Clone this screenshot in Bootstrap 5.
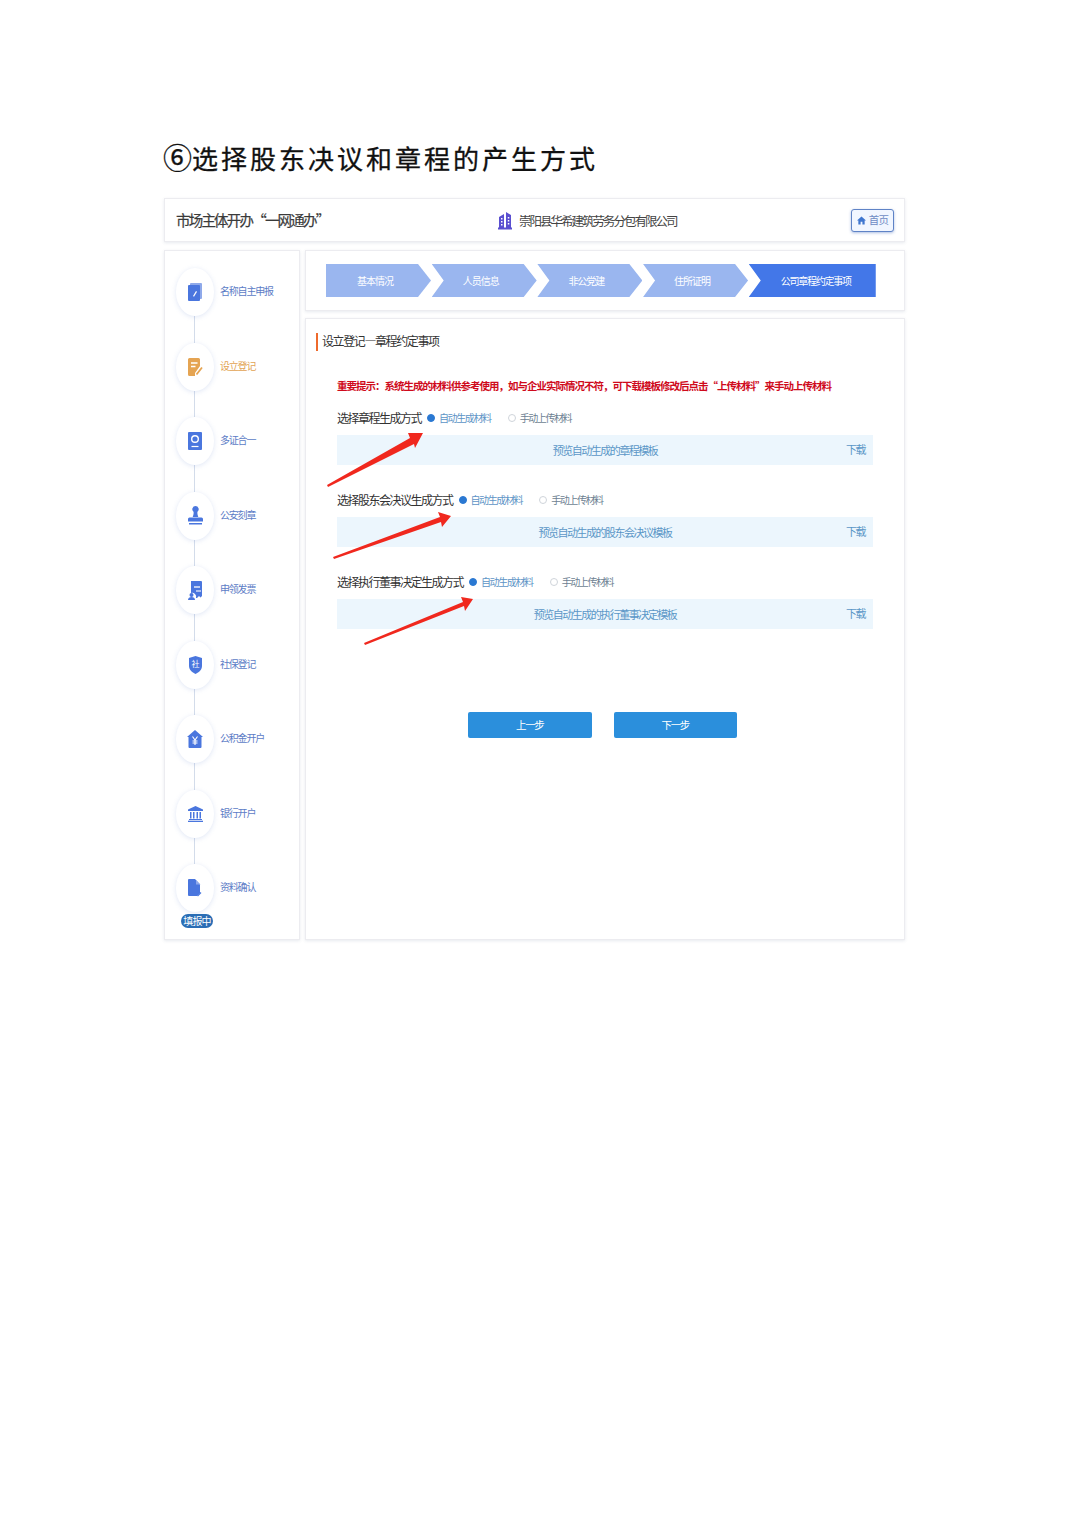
<!DOCTYPE html>
<html lang="zh-CN">
<head>
  <meta charset="UTF-8" />
  <meta name="viewport" content="width=device-width, initial-scale=1">
  <title>选择股东决议和章程的产生方式</title>
  <link href="https://cdn.jsdelivr.net/npm/bootstrap@5.3.0/dist/css/bootstrap.min.css" rel="stylesheet">
  <style>
    body {
      font-family: "Noto Sans CJK SC", "Liberation Sans", sans-serif;
      background: #fff;
      color: #333;
    }
    .pageWrap {
      position: relative;
      width: 1074px;
      height: 1520px;
      padding: 142px 0 0 164px;
    }
    .docTitle {
      height: 30px;
      font-size: 26px;
      line-height: 30px;
      letter-spacing: 3px;
      color: #111;
      margin: 0 0 26px -1px;
      font-weight: 400;
      -webkit-text-stroke: .3px #111;
      white-space: nowrap;
    }
    .circleNum { font-size: 29px; letter-spacing: 0; line-height: 1; }
    .appFrame { width: 741px; }
    .panelBox {
      background: #fff;
      border: 1px solid #ececf0;
      box-shadow: 0 1px 3px rgba(60, 80, 120, .12);
    }
    .topBar {
      height: 44px;
      margin-bottom: 8px;
      padding: 0 10px 0 11px;
      position: relative;
    }
    .brandText {
      font-size: 14.5px;
      letter-spacing: -1.8px;
      color: #3a3a3a;
      -webkit-text-stroke: .2px #3a3a3a;
    }
    .companyText {
      font-size: 12.5px;
      letter-spacing: -2px;
      color: #444;
    }
    .companyBox { position: absolute; left: 333px; top: 13px; gap: 7px; }
    .homeBtn {
      width: 43px;
      height: 23px;
      padding: 0;
      font-size: 10.5px;
      letter-spacing: -.8px;
      color: #6f8cc4;
      background: #f1f6ff;
      border: 1px solid #5f83c6;
      border-radius: 3px;
      box-shadow: 0 1px 3px rgba(70, 110, 190, .45);
      gap: 3px;
    }
    .bodyRow { gap: 5px; }
    .sideNav {
      width: 136px;
      height: 690px;
      padding: 17px 0 0 11px;
      position: relative;
    }
    .navNode { height: 48px; gap: 6px; position: relative; }
    .navOval {
      width: 38px;
      height: 48px;
      border-radius: 50%;
      background: #fff;
      box-shadow: 0 1px 5px rgba(110, 140, 210, .22);
      flex: none;
    }
    .navText {
      font-size: 10px;
      letter-spacing: -1.2px;
      color: #5c7cc6;
      margin-top: -3px;
    }
    .navText.isActive { color: #e2a352; }
    .navLine {
      width: 1px;
      height: 26.5px;
      margin-left: 18px;
      background: #d3dcea;
    }
    .statusPill {
      position: absolute;
      left: 5px;
      top: 50px;
      width: 32px;
      height: 14px;
      line-height: 14px;
      text-align: center;
      border-radius: 7px;
      background: #2a6db5;
      color: #fff;
      font-size: 10px;
      letter-spacing: -.9px;
    }
    .mainCol { width: 600px; }
    .stepBar {
      height: 61px;
      margin-bottom: 7px;
      padding-left: 20px;
    }
    .stepItem {
      width: 105px;
      height: 33px;
      margin-right: .7px;
      padding-right: 7px;
      background: #9ab6ef;
      color: #fff;
      font-size: 10px;
      letter-spacing: -1px;
      clip-path: polygon(0 0, 92px 0, 100% 50%, 92px 100%, 0 100%, 12px 50%);
    }
    .stepItem:first-child { clip-path: polygon(0 0, 92px 0, 100% 50%, 92px 100%, 0 100%); }
    .stepItem.isCurrent {
      width: 127px;
      padding: 0 0 0 7px;
      background: #4377e8;
      letter-spacing: -1.25px;
      clip-path: polygon(0 0, 100% 0, 100% 100%, 0 100%, 12px 50%);
    }
    .formBox {
      height: 622px;
      padding: 14px 31px 0 31px;
      position: relative;
    }
    .formHead {
      height: 18px;
      line-height: 16px;
      font-size: 12px;
      letter-spacing: -1.4px;
      color: #333;
      margin-left: -21px;
      padding-left: 4px;
      border-left: 2px solid #ee6a2c;
      margin-bottom: 27px;
    }
    .noticeText {
      font-size: 10.5px;
      line-height: 16px;
      letter-spacing: -1px;
      font-weight: 700;
      color: #cf0a1c;
      margin-bottom: 15px;
      white-space: nowrap;
    }
    .optRow { height: 18px; margin-bottom: 8px; }
    .optLabel {
      font-size: 12px;
      letter-spacing: -1.5px;
      color: #333;
      margin-right: 6px;
    }
    .optRow .form-check-input {
      width: 8px;
      height: 8px;
      margin: 0 4px 0 0;
      flex: none;
      border: 1px solid #cfd4da;
    }
    .optRow .form-check-input:checked {
      background: #2a78d2;
      border-color: #2a78d2;
    }
    .optText {
      font-size: 10px;
      letter-spacing: -1.4px;
      color: #6d7f92;
      margin: -1px 17px 0 0;
    }
    .optText.isOn { color: #5d94c6; }
    .tplBar {
      height: 30px;
      background: #ecf6fd;
      color: #5b97c7;
      font-size: 11px;
      letter-spacing: -1.5px;
      position: relative;
      margin-bottom: 26px;
    }
    .tplDown { position: absolute; right: 8px; top: 6px; line-height: 16px; }
    .btnGroupRow { gap: 22px; margin: 83px 0 0 131px; }
    .stepBtn {
      width: 123.5px;
      height: 26px;
      padding: 0;
      border: 0;
      border-radius: 2px;
      background: #2b8fdc;
      color: #fff;
      font-size: 10.5px;
      letter-spacing: -1.3px;
    }
    .arrowLayer {
      position: absolute;
      left: 0;
      top: 0;
      pointer-events: none;
    }
  </style>
</head>
<body>
  <div class="pageWrap">
    <h1 class="docTitle"><span class="circleNum">⑥</span>选择股东决议和章程的产生方式</h1>

    <div class="appFrame">
      <div class="panelBox topBar d-flex align-items-center justify-content-between">
        <span class="brandText">市场主体开办“一网通办”</span>
        <div class="companyBox d-flex align-items-center">
          <svg width="14" height="18" viewBox="0 0 14 18" fill="#5a4fd0"><path d="M1 5l5-3v14H1zM8 0l5 3v13H8z"/><rect y="15.500" width="14" height="2"/><path fill="#fff" d="M3 6h1.500v1.500H3zM3 9h1.500v1.500H3zM3 12h1.500v1.500H3zM9.800 5h1.500v1.500H9.800zM9.800 8h1.500v1.500H9.800zM9.800 11h1.500v1.500H9.800z"/></svg>
          <span class="companyText">崇阳县华希建筑劳务分包有限公司</span>
        </div>
        <button type="button" class="btn homeBtn d-flex align-items-center justify-content-center">
          <svg width="9" height="9" viewBox="0 0 10 10" fill="#3f76cf"><path d="M5 .5L10 5H8.500v4.500H6V6.500H4v3H1.500V5H0z"/></svg>首页
        </button>
      </div>

      <div class="bodyRow d-flex">
        <div class="panelBox sideNav">
          <div class="navNode d-flex align-items-center">
            <div class="navOval d-flex align-items-center justify-content-center">
              <svg width="14" height="18" viewBox="0 0 14 18"><rect x="2" width="12" height="16" rx="1" fill="#8fa9ea"/><rect y="2" width="12" height="16" rx="1" fill="#4a76de"/><path d="M5 13l3-5 1 .8-3 5z" fill="#fff"/></svg>
            </div>
            <span class="navText">名称自主申报</span>
          </div>
          <div class="navLine"></div>
          <div class="navNode d-flex align-items-center">
            <div class="navOval d-flex align-items-center justify-content-center">
              <svg width="15" height="18" viewBox="0 0 15 18"><path d="M1.500 0h9A1.500 1.500 0 0 1 12 1.500V8l-5 7v3H1.500A1.500 1.500 0 0 1 0 16.500v-15A1.500 1.500 0 0 1 1.500 0z" fill="#e5a452"/><path d="M3 5h6.500M3 8.500h4.500" stroke="#fff" stroke-width="1.300"/><path d="M8.500 16.500l5.500-7" stroke="#e5a452" stroke-width="1.800"/></svg>
            </div>
            <span class="navText isActive">设立登记</span>
          </div>
          <div class="navLine"></div>
          <div class="navNode d-flex align-items-center">
            <div class="navOval d-flex align-items-center justify-content-center">
              <svg width="14" height="18" viewBox="0 0 14 18"><rect width="14" height="18" rx="1" fill="#4a76de"/><circle cx="7" cy="7" r="3.300" fill="none" stroke="#fff" stroke-width="1.400"/><path d="M3.500 14.500h7" stroke="#fff" stroke-width="1.200"/></svg>
            </div>
            <span class="navText">多证合一</span>
          </div>
          <div class="navLine"></div>
          <div class="navNode d-flex align-items-center">
            <div class="navOval d-flex align-items-center justify-content-center">
              <svg width="15" height="19" viewBox="0 0 15 19" fill="#4a76de"><path d="M7.500 0a3.200 3.200 0 0 1 2 5.700c-.4 1.800 0 3.300.8 5.300H4.700c.8-2 1.200-3.500.8-5.300a3.200 3.200 0 0 1 2-5.700z"/><path d="M1.500 11.500h12a1.500 1.500 0 0 1 1.500 1.500v2.500H0V13a1.500 1.500 0 0 1 1.500-1.500z"/><rect x="1" y="17" width="13" height="1.500"/></svg>
            </div>
            <span class="navText">公安刻章</span>
          </div>
          <div class="navLine"></div>
          <div class="navNode d-flex align-items-center">
            <div class="navOval d-flex align-items-center justify-content-center">
              <svg width="15" height="19" viewBox="0 0 15 19" fill="#4a76de"><path d="M3 0h10a1 1 0 0 1 1 1v14l-1.500 1.500-1.500-1.500-2 2H8a4 4 0 0 0-5-5z"/><path d="M6 6h6" stroke="#fff" stroke-width="1.300"/><path d="M8 10h5" stroke="#fff" stroke-width="1.100"/><circle cx="3.500" cy="14" r="2"/><path d="M0 19c0-2 1.500-3 3.500-3S7 17 7 19z"/></svg>
            </div>
            <span class="navText">申领发票</span>
          </div>
          <div class="navLine"></div>
          <div class="navNode d-flex align-items-center">
            <div class="navOval d-flex align-items-center justify-content-center">
              <svg width="13" height="18" viewBox="0 0 13 18"><path d="M6.500 0L13 2v8c0 3.500-3 6.500-6.500 8C3 16.500 0 13.500 0 10V2z" fill="#4a76de"/><text x="6.500" y="11" font-size="8" fill="#fff" text-anchor="middle">社</text></svg>
            </div>
            <span class="navText">社保登记</span>
          </div>
          <div class="navLine"></div>
          <div class="navNode d-flex align-items-center">
            <div class="navOval d-flex align-items-center justify-content-center">
              <svg width="16" height="18" viewBox="0 0 16 18"><path d="M8 0l8 7h-1.500v10a1 1 0 0 1-1 1h-11a1 1 0 0 1-1-1V7H0z" fill="#4a76de"/><path d="M5.500 6.500L8 10l2.500-3.500M8 10v5M5.500 11h5M5.500 13h5" stroke="#fff" stroke-width="1.100" fill="none"/></svg>
            </div>
            <span class="navText">公积金开户</span>
          </div>
          <div class="navLine"></div>
          <div class="navNode d-flex align-items-center">
            <div class="navOval d-flex align-items-center justify-content-center">
              <svg width="15" height="16" viewBox="0 0 15 16" fill="#4a76de"><path d="M7.500 0L15 3.500V5H0V3.500z"/><path d="M2 6h1.500v6.500H2zM5 6h1.500v6.500H5zM8.500 6H10v6.500H8.500zM11.500 6H13v6.500h-1.500z"/><rect x="1" y="13" width="13" height="1"/><rect y="14.700" width="15" height="1.300"/></svg>
            </div>
            <span class="navText">银行开户</span>
          </div>
          <div class="navLine"></div>
          <div class="navNode d-flex align-items-center">
            <div class="navOval d-flex align-items-center justify-content-center">
              <svg width="14" height="18" viewBox="0 0 14 18" fill="#4a76de"><path d="M1 0h6l5 5.500V14l-3 3H1a1 1 0 0 1-1-1V1a1 1 0 0 1 1-1z"/><path d="M8 1l4.500 4.500H8z" fill="#8fa9ea"/><path d="M9.500 17l3.500-3.500" stroke="#4a76de" stroke-width="1.200"/></svg>
            </div>
            <span class="navText">资料确认</span>
            <span class="statusPill">填报中</span>
          </div>
        </div>

        <div class="mainCol">
          <div class="panelBox stepBar d-flex align-items-center">
            <div class="stepItem d-flex align-items-center justify-content-center">基本情况</div>
            <div class="stepItem d-flex align-items-center justify-content-center">人员信息</div>
            <div class="stepItem d-flex align-items-center justify-content-center">非公党建</div>
            <div class="stepItem d-flex align-items-center justify-content-center">住所证明</div>
            <div class="stepItem isCurrent d-flex align-items-center justify-content-center">公司章程约定事项</div>
          </div>

          <div class="panelBox formBox">
            <div class="formHead">设立登记—章程约定事项</div>
            <div class="noticeText">重要提示：系统生成的材料供参考使用，如与企业实际情况不符，可下载模板修改后点击“上传材料”来手动上传材料</div>

            <div class="optRow d-flex align-items-center">
              <span class="optLabel">选择章程生成方式</span>
              <input class="form-check-input" type="radio" name="opt1" checked>
              <span class="optText isOn">自动生成材料</span>
              <input class="form-check-input" type="radio" name="opt1">
              <span class="optText">手动上传材料</span>
            </div>
            <div class="tplBar d-flex align-items-center justify-content-center">预览自动生成的章程模板<span class="tplDown">下载</span></div>

            <div class="optRow d-flex align-items-center">
              <span class="optLabel">选择股东会决议生成方式</span>
              <input class="form-check-input" type="radio" name="opt2" checked>
              <span class="optText isOn">自动生成材料</span>
              <input class="form-check-input" type="radio" name="opt2">
              <span class="optText">手动上传材料</span>
            </div>
            <div class="tplBar d-flex align-items-center justify-content-center">预览自动生成的股东会决议模板<span class="tplDown">下载</span></div>

            <div class="optRow d-flex align-items-center">
              <span class="optLabel">选择执行董事决定生成方式</span>
              <input class="form-check-input" type="radio" name="opt3" checked>
              <span class="optText isOn">自动生成材料</span>
              <input class="form-check-input" type="radio" name="opt3">
              <span class="optText">手动上传材料</span>
            </div>
            <div class="tplBar d-flex align-items-center justify-content-center">预览自动生成的执行董事决定模板<span class="tplDown">下载</span></div>

            <div class="btnGroupRow d-flex">
              <button type="button" class="btn stepBtn">上一步</button>
              <button type="button" class="btn stepBtn">下一步</button>
            </div>
          </div>
        </div>
      </div>
    </div>

    <!-- red annotation arrows drawn over the screenshot -->
    <svg class="arrowLayer" width="1074" height="1520" viewBox="0 0 1074 1520" fill="#f0281e">
      <polygon points="327,485 328,487 414,444 415,448 423,433 408,433 410,438"/>
      <polygon points="333,557 334,559 441,522 442,527 451,516 438,512 440,517"/>
      <polygon points="364,643 365,645 464,606 465,611 473,599 461,597 463,602"/>
    </svg>
  </div>

  <script src="https://cdn.jsdelivr.net/npm/bootstrap@5.3.0/dist/js/bootstrap.bundle.min.js"></script>
</body>
</html>
